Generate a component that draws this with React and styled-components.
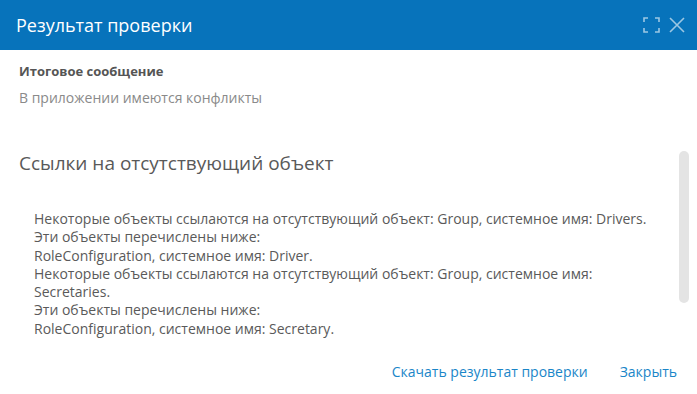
import React from "react";
import styled, {createGlobalStyle} from "styled-components";

const GlobalStyle = createGlobalStyle`
  html, body {
    margin: 0;
    padding: 0;
    background: #ffffff;
  }
  body {
    font-family: "Open Sans", "Noto Sans", sans-serif;
  }
`;

const Dialog = styled.div`
  width: 697px;
  height: 394px;
  display: flex;
  flex-direction: column;
  background: #ffffff;
  overflow: hidden;
`;

const Header = styled.div`
  height: 50px;
  flex-shrink: 0;
  background: #0773bb;
  display: flex;
  align-items: center;
  justify-content: space-between;
  padding: 0 12px 0 16px;
  box-sizing: border-box;
`;

const Title = styled.div`
  color: #ffffff;
  font-size: 18px;
  line-height: 24px;
  margin-top: -1px;
`;

const HeaderTools = styled.div`
  display: flex;
  align-items: center;
  gap: 9px;
`;

const ToolButton = styled.div`
  display: flex;
  align-items: center;
  justify-content: center;
  cursor: pointer;
  opacity: 0.6;
`;

const Summary = styled.div`
  padding: 12px 19px 0;
  display: flex;
  flex-direction: column;
  gap: 8px;
`;

const SummaryLabel = styled.div`
  font-size: 13px;
  font-weight: 700;
  line-height: 18px;
  color: #555555;
`;

const SummaryText = styled.div`
  font-size: 14px;
  line-height: 20px;
  color: #8a8a8a;
`;

const ScrollArea = styled.div`
  position: relative;
  margin-top: 43px;
  height: 195px;
  flex-shrink: 0;
  overflow: hidden;
`;

const ScrollThumb = styled.div`
  position: absolute;
  right: 8px;
  top: 0;
  width: 10px;
  height: 152px;
  border-radius: 5px;
  background: #e4e4e4;
`;

const SectionTitle = styled.div`
  padding: 0 19px;
  font-size: 19px;
  line-height: 24px;
  color: #595959;
`;

const MessageList = styled.div`
  margin-top: 35px;
  padding: 0 37px 0 34px;
  font-size: 14px;
  line-height: 18.3px;
  color: #5a5a5a;
`;

const Footer = styled.div`
  margin-top: auto;
  height: 32px;
  display: flex;
  justify-content: flex-end;
  align-items: flex-start;
  gap: 32px;
  padding: 0 20px 0 0;
`;

const LinkButton = styled.span`
  font-size: 14px;
  line-height: 20px;
  color: ${p => p.color || "#1a86c8"};
  cursor: pointer;
`;

const MaximizeIcon = () => (
  <svg width="17" height="16" viewBox="0 0 17 16" fill="none" stroke="#ffffff" strokeWidth="1.6">
    <path d="M1 5V1h4M12 1h4v4M16 11v4h-4M5 15H1v-4"/>
  </svg>
);

const CloseIcon = () => (
  <svg width="16" height="16" viewBox="0 0 16 16" fill="none" stroke="#ffffff" strokeWidth="1.6">
    <path d="M1 1l14 14M15 1L1 15"/>
  </svg>
);

const messages = [
  "Некоторые объекты ссылаются на отсутствующий объект: Group, системное имя: Drivers.",
  "Эти объекты перечислены ниже:",
  "RoleConfiguration, системное имя: Driver.",
  "Некоторые объекты ссылаются на отсутствующий объект: Group, системное имя: Secretaries.",
  "Эти объекты перечислены ниже:",
  "RoleConfiguration, системное имя: Secretary.",
];

export default function App() {
  return (
    <>
      <GlobalStyle/>
      <Dialog>
        <Header>
          <Title>Результат проверки</Title>
          <HeaderTools>
            <ToolButton><MaximizeIcon/></ToolButton>
            <ToolButton><CloseIcon/></ToolButton>
          </HeaderTools>
        </Header>
        <Summary>
          <SummaryLabel>Итоговое сообщение</SummaryLabel>
          <SummaryText>В приложении имеются конфликты</SummaryText>
        </Summary>
        <ScrollArea>
          <ScrollThumb/>
          <SectionTitle>Ссылки на отсутствующий объект</SectionTitle>
          <MessageList>
            {messages.map((m, i) => <div key={i}>{m}</div>)}
          </MessageList>
        </ScrollArea>
        <Footer>
          <LinkButton>Скачать результат проверки</LinkButton>
          <LinkButton>Закрыть</LinkButton>
        </Footer>
      </Dialog>
    </>
  );
}
